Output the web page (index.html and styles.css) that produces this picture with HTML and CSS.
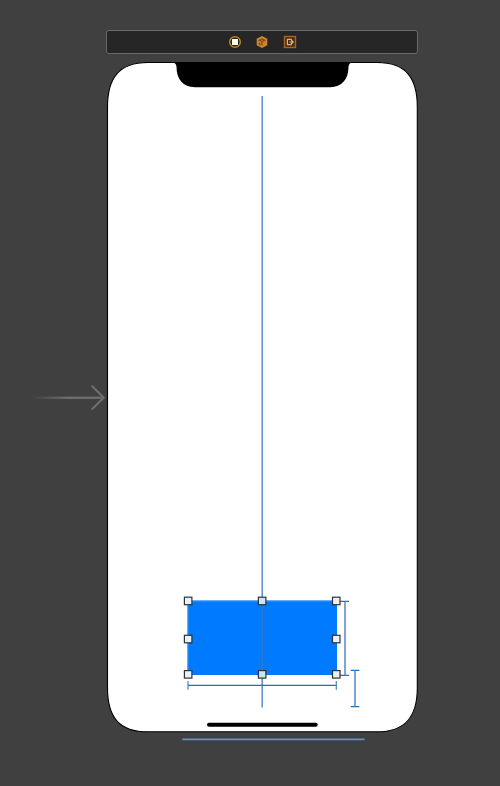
FILE: index.html
```html
<!DOCTYPE html>
<html lang="en">
<head>
<meta charset="utf-8">
<title>Storyboard</title>
<link rel="stylesheet" href="styles.css">
</head>
<body>
<main class="canvas">
  <section class="scene">
    <header class="dock">
      <svg class="icon" viewBox="0 0 14 14">
        <circle cx="7" cy="7" r="5.3" fill="#28200e" stroke="#b5862b" stroke-width="1.5"/>
        <rect x="4" y="4" width="6" height="6" rx=".5" fill="#fff"/>
      </svg>
      <svg class="icon" viewBox="0 0 14 14">
        <path d="M7 1 12.3 3.8V10.2L7 13 1.7 10.2V3.8Z" fill="#d0832d"/>
        <path d="M4.2 5.2 7 4 9.8 5.2 7 6.5ZM7 6.5V10.6M4.4 7.4V9.2L5.6 9.9" fill="none" stroke="#704616" stroke-width="1.1"/>
      </svg>
      <svg class="icon" viewBox="0 0 14 14">
        <rect x="1.5" y="1.5" width="11" height="11" fill="#4b2b0d" stroke="#a76526" stroke-width="1.4"/>
        <path d="M8.3 5.4V4.4H4.4V9.6H8.3V8.6M6.3 7H9.5M8.3 5.3 10.2 7 8.3 8.7" fill="none" stroke="#d8b48e" stroke-width="1.2"/>
      </svg>
    </header>
    <div class="device">
      <svg class="frame" viewBox="106 62 312 671">
        <path d="M107.5 107C107.5 78 119 62.5 148 62.5H377C406 62.5 417.3 78 417.3 107V688C417.3 717 405 731.8 377 731.8H148C119 731.8 107.5 717 107.5 688Z" fill="#fff" stroke="#000" stroke-width="1.1"/>
        <path d="M172 62H353Q348.5 63 348.5 67C348.5 79 342 87.2 330 87.2H195C183 87.2 176.5 79 176.5 67Q176.5 63 172 62Z"/>
        <rect x="207" y="722.7" width="110.7" height="4" rx="2"/>
      </svg>
    </div>
  </section>

  <svg class="entry" viewBox="30 380 78 36">
    <defs>
      <linearGradient id="fade" gradientUnits="userSpaceOnUse" x1="31" x2="68" y1="0" y2="0">
        <stop offset="0" stop-color="#6e6e6e" stop-opacity="0"/>
        <stop offset="1" stop-color="#6e6e6e"/>
      </linearGradient>
    </defs>
    <rect x="31" y="396.6" width="72" height="2.3" fill="url(#fade)"/>
    <path d="M91.7 385.8 103.8 397.7 91.7 409.6" fill="none" stroke="#6e6e6e" stroke-width="2.1"/>
  </svg>

  <svg class="selection" viewBox="180 90 190 655">
    <rect x="187.5" y="600.5" width="149.5" height="74.5" fill="#007aff"/>
    <path d="M187.9 675V601H337" fill="none" stroke="#4b9cf5" stroke-width=".9"/>
    <path d="M262.2 96V601M262.2 675V707.5" stroke="#5b8dc4" stroke-width="1.5"/>
    <path d="M262.2 601V675" stroke="#3679ba" stroke-width="1.3"/>
    <g fill="none" stroke-width="1.2">
      <path d="M188 685.4H336.5M340 601.4H349M340 675.4H349M350.7 670.4H359.3M350.7 706.6H359.3" stroke="#1f70b4"/>
      <path d="M188 681V689.7M336.3 681V689.7" stroke="#4884bd"/>
      <path d="M345 601.4V675.4M355 670.4V706.6" stroke="#5c91c9" stroke-width="1.6"/>
    </g>
    <path d="M182.3 739.4H364.5" stroke="#6890c4" stroke-width="1.7"/>
    <g fill="#e9f1fb" stroke="#303236" stroke-width="1.2">
      <rect x="184.4" y="597.2" width="7.5" height="7.5"/>
      <rect x="258.4" y="597.2" width="7.5" height="7.5" fill="#cfe3f8"/>
      <rect x="332.5" y="597.2" width="7.5" height="7.5"/>
      <rect x="184.4" y="635.3" width="7.5" height="7.5"/>
      <rect x="332.5" y="635.3" width="7.5" height="7.5"/>
      <rect x="184.4" y="670.6" width="7.5" height="7.5"/>
      <rect x="258.4" y="670.6" width="7.5" height="7.5" fill="#cfe3f8"/>
      <rect x="332.5" y="670.6" width="7.5" height="7.5"/>
    </g>
  </svg>
</main>
</body>
</html>
```
FILE: styles.css
```css
* {
  box-sizing: border-box;
}

body {
  margin: 0;
  background: #404040;
  font-family: "Liberation Sans", sans-serif;
}

.canvas {
  position: relative;
  height: 786px;
  padding: 30px 82px 0 106px;
  overflow: hidden;
}

.scene {
  display: flex;
  flex-direction: column;
  gap: 8px;
}

.dock {
  display: flex;
  align-items: center;
  justify-content: center;
  gap: 13.7px;
  height: 24px;
  padding: 0.6px 0 0 0.8px;
  border: 1px solid #686868;
  border-radius: 3px;
  background: #262626;
}

.icon {
  width: 14px;
  height: 14px;
}

.device {
  height: 671px;
}

.frame {
  display: block;
  width: 312px;
  height: 671px;
}

/* Items pinned to canvas coordinates */
.entry,
.selection {
  position: absolute;
}

.entry {
  left: 30px;
  top: 380px;
  width: 78px;
  height: 36px;
}

.selection {
  left: 180px;
  top: 90px;
  width: 190px;
  height: 655px;
}
```
